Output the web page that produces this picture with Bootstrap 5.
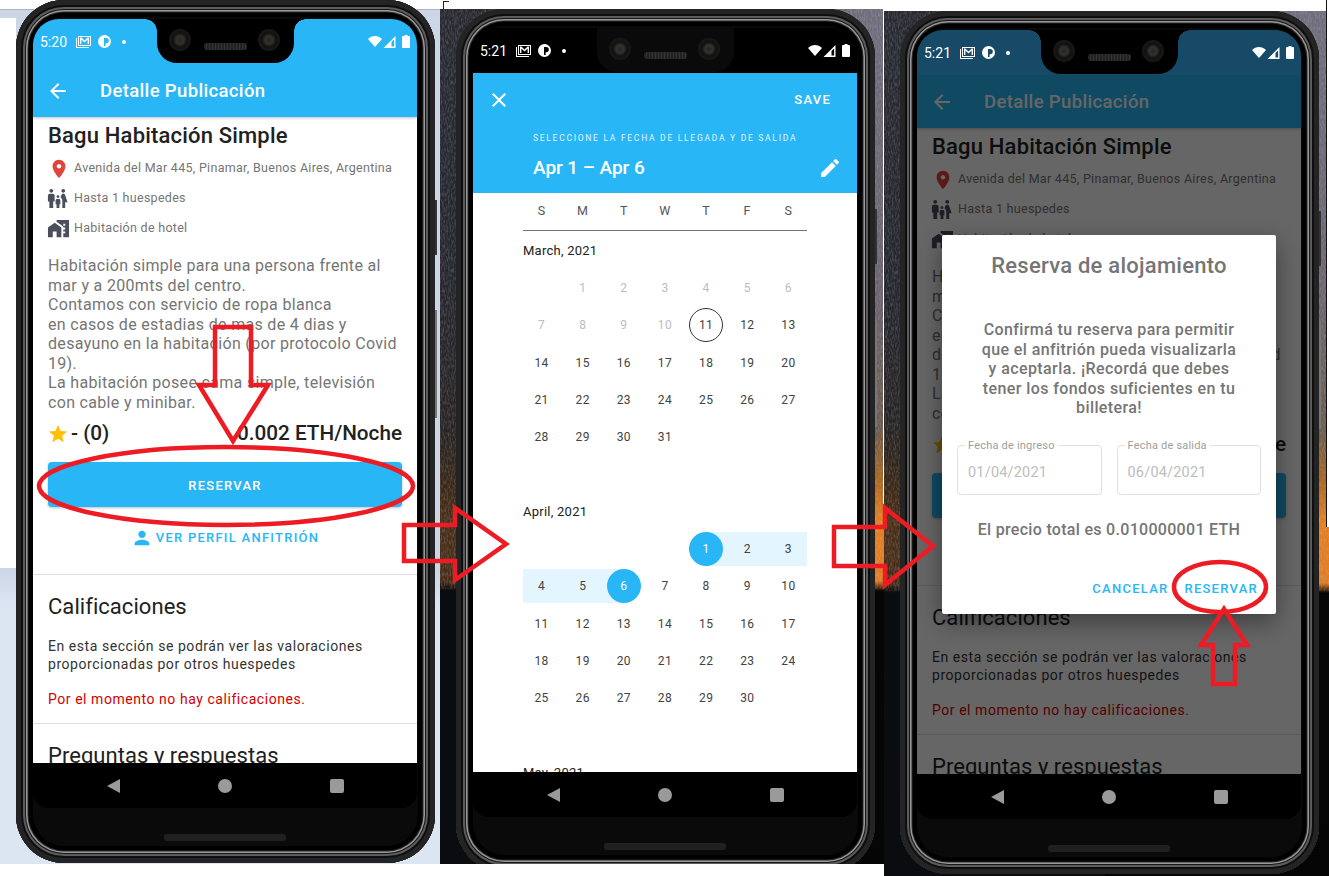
<!DOCTYPE html>
<html lang="es">
<head>
  <meta charset="UTF-8">
  <title>Reserva de alojamiento</title>
  <link href="https://cdn.jsdelivr.net/npm/bootstrap@5.3.0/dist/css/bootstrap.min.css" rel="stylesheet">
  <style>
    body { margin: 0; background: #fff; font-family: Roboto, "Liberation Sans", sans-serif; overflow: hidden; }
    .lienzo { width: 1329px; height: 876px; overflow: hidden; }
    .panel { overflow: hidden; }
    .panel-a { left: 0; top: 0; width: 440px; height: 864px;
      background: linear-gradient(to right, #fff 0, #fff 16px, #ccd6e7 16px, #ccd6e7 100%) top / 100% 568px no-repeat,
        linear-gradient(#cbd6e6, #dce6f3 40px, #dce6f3) bottom / 100% 296px no-repeat; }
    .regla { left: 0; top: 0; width: 440px; height: 10px; background: #fff; border-bottom: 1px solid #aab4c4; }
    .banda { left: 0; top: 10px; width: 16px; height: 8px; background: #ccd6e7; }
    .panel-b, .panel-c { background:
        linear-gradient(to right, rgba(12,15,20,.72) 0, rgba(12,15,20,.72) 50%, transparent 50%),
        linear-gradient(#6f6c7c 0, #6a6570 280px, #6b5a4c 420px, #a9651f 470px, #e27d20 510px, #e07b22 572px, #060606 582px, #050505 100%); }
    .panel-b { left: 440px; top: 9px; width: 444px; height: 855px; }
    .panel-c { left: 884px; top: 11px; width: 445px; height: 865px; }
    .grano { left: 0; top: 0; width: 100%; height: 580px; opacity: .28; }
    .linea-b { left: 883px; top: 5px; width: 1px; height: 500px; background: #fff; }
    .esquina { left: 443px; top: 1px; width: 6px; height: 8px; border-top: 1px solid #222; border-left: 1px solid #222; }
    .tapa-c { left: 1326px; top: 0; width: 3px; height: 527px; background: #fff; border-left: 1px solid #111; }

    .telefono { width: 419px; height: 863px; margin-left: 16px; padding: 19px 18px 0 17px; background: #0a0a0a; border-radius: 48px;
      box-shadow: inset 0 0 0 5px #242424, inset 0 0 0 7px #0e0e0e, inset 0 0 0 9px #5c5c5c, inset 0 0 0 10px #181818, inset 0 0 0 11.5px #9a9a9a, inset 0 0 0 12.5px #2a2a2a, inset 0 0 0 17px #000; }
    .pantalla { width: 384px; height: 789px; background: #000; border-radius: 26px 26px 16px 16px; overflow: hidden; }
    .parlante { width: 122px; height: 7px; margin: 26px auto 0; background: #202020; border-radius: 3px; }
    .muesca { left: 141px; top: 19px; width: 137px; height: 44px; background: #000; border-radius: 0 0 20px 20px; z-index: 4; }
    .muesca::before, .muesca::after { content: ""; position: absolute; top: 0; width: 12px; height: 12px; }
    .muesca::before { left: -12px; background: radial-gradient(circle at 0 100%, transparent 11.5px, #000 12px); }
    .muesca::after { right: -12px; background: radial-gradient(circle at 100% 100%, transparent 11.5px, #000 12px); }
    .telefono-b .muesca { background: #0a0a0a; }
    .telefono-b .muesca::before, .telefono-b .muesca::after { display: none; }
    .camara { top: 10px; width: 22px; height: 22px; border-radius: 50%; background: radial-gradient(circle, #26241f 0, #34322e 25%, #111 45%, #24221e 100%); }
    .camara-i { left: 12px; }
    .camara-d { right: 14px; }
    .rejilla { left: 47px; top: 24px; width: 43px; height: 7px; border-radius: 3px; background: repeating-linear-gradient(to right, #222 0, #222 2px, #333 2px, #333 3px); }
    .boton-a { right: -2px; top: 200px; width: 2px; height: 55px; background: #333; }
    .boton-b { right: -2px; top: 310px; width: 2px; height: 108px; background: #777; }

    .estado { height: 45px; flex: none; padding: 0 7px; color: #fff; font-size: 14px; background: #29b6f6; position: relative; z-index: 3; }
    .telefono-b .estado { background: #000; }
    .telefono-c .estado { background: #164a66; }
    .hora { width: 36px; padding-top: 1px; }
    .ico-mail { width: 15px; height: 12px; margin-right: 7px; }
    .ico-p { width: 13px; height: 13px; margin-right: 11px; }
    .punto { width: 4px; height: 4px; border-radius: 50%; background: #fff; }
    .ico-wifi { width: 14px; height: 11px; }
    .ico-senal { width: 13px; height: 12px; margin: 0 6px 0 1px; }
    .ico-bat { width: 8px; height: 13px; }

    .barra { height: 53px; flex: none; background: #29b6f6; color: #fff; padding-left: 13px; box-shadow: 0 1px 3px rgba(0,0,0,.25); position: relative; z-index: 2; }
    .ico-atras { width: 24px; height: 24px; margin-right: 30px; fill: #fff; }
    .titulo-barra { padding-top: 3px; font-size: 18.5px; font-weight: 500; letter-spacing: .35px; }

    .detalle { background: #fff; color: #212121; }
    .bloque { padding: 0 15px; }
    .titulo-pub { margin: 6px 0 4px; font-size: 22px; line-height: 26px; font-weight: 500; letter-spacing: .18px; color: #212121; }
    .fila-dato { height: 30px; padding-top: 1px; color: #757575; font-size: 12.5px; letter-spacing: .29px; }
    .ico-dato { flex: none; fill: #4b4f5b; }
    .ico-pin { fill: #e0443a; width: 22px; height: 22px; margin-right: 4px; }
    .ico-familia { width: 23px; height: 23px; margin: 0 5px 0 -2px; }
    .ico-casa { width: 23px; height: 23px; margin: 0 4px 0 -1px; }
    .descripcion { margin: 13px 0 0; font-size: 16px; line-height: 19.5px; letter-spacing: .32px; color: #757575; }
    .valoracion { margin-top: 9px; height: 26px; font-size: 20.7px; font-weight: 500; color: #212121; }
    .ico-estrella { width: 22px; height: 22px; margin: 0 2px 0 -1px; fill: #ffc107; }
    .btn-reservar { display: block; width: 100%; height: 45px; margin-top: 15px; padding: 2px 0 0; line-height: 43px; border: 0; border-radius: 4px; background: #29b6f6; color: #fff; font-size: 13px; font-weight: 500; letter-spacing: 1.25px; box-shadow: 0 1px 3px rgba(0,0,0,.25); }
    .btn-reservar:hover { background: #29b6f6; color: #fff; }
    .enlace-perfil { height: 20px; margin-top: 21px; color: #29b6f6; font-size: 13px; font-weight: 500; letter-spacing: 1.25px; }
    .ico-persona { width: 22px; height: 22px; margin-right: 3px; fill: #29b6f6; }
    .seccion { border-top: 1px solid #e0e0e0; margin-top: 26px; padding: 19px 15px 0; }
    .seccion-dos { margin-top: 15px; }
    .subtitulo { margin: 0; font-size: 22px; line-height: 26px; font-weight: 400; color: #212121; letter-spacing: .05px; }
    .aviso { margin: 17px 0 0; font-size: 14px; line-height: 18px; letter-spacing: .55px; color: #333; }
    .aviso-rojo { color: #d50000; }

    .navegacion { height: 45px; flex: none; background: #000; gap: 98px; }
    .nav-atras { width: 0; height: 0; border-style: solid; border-width: 7.5px 13px 7.5px 0; border-color: transparent #9a9a9a transparent transparent; }
    .nav-inicio { width: 14px; height: 14px; border-radius: 50%; background: #9a9a9a; }
    .nav-tareas { width: 14px; height: 14px; border-radius: 2px; background: #9a9a9a; }

    .cabecera { height: 120px; flex: none; background: #29b6f6; color: #fff; }
    .cab-fila { height: 53px; padding: 0 26px 0 14px; }
    .ico-cerrar { width: 24px; height: 24px; fill: #fff; }
    .guardar { font-size: 13px; font-weight: 500; letter-spacing: 1.25px; }
    .cab-ayuda { margin: 6px 0 0; padding-left: 60px; height: 12px; line-height: 12px; font-size: 8.5px; font-weight: 400; letter-spacing: 1.72px; color: #e3f5fe; }
    .cab-rango { margin-top: 10px; height: 28px; padding: 0 15px 0 60px; font-size: 19px; font-weight: 500; letter-spacing: -.05px; }
    .ico-lapiz { width: 24px; height: 24px; fill: #fff; }
    .calendario { background: #fff; color: #424242; font-size: 12px; letter-spacing: .4px; }
    .semana { height: 38px; margin: 0 50px 9px; border-bottom: 1px solid #757575; }
    .semana-fila { height: 37px; margin: 0 -2px; display: grid; grid-template-columns: repeat(7, 1fr); align-items: center; text-align: center; font-size: 12.5px; color: #555; }
    .mes { margin: 0 50px; padding-bottom: 45px; }
    .mes-nombre { height: 20px; padding-top: 1px; line-height: 20px; margin-bottom: 9.3px; font-size: 13px; color: #212121; letter-spacing: .25px; }
    .dias { margin: 0 -2px; display: grid; grid-template-columns: repeat(7, 1fr); grid-auto-rows: 37.33px; align-items: center; clip-path: inset(0 2px); }
    .dia { height: 34px; display: flex; align-items: center; justify-content: center; position: relative; }
    .dia-off { color: #bdbdbd; }
    .dia-hoy span { width: 34px; height: 34px; border: 1px solid #333; border-radius: 50%; display: flex; align-items: center; justify-content: center; }
    .dia-rango { background: #e3f5fe; }
    .dia-ini { background: linear-gradient(to right, transparent 50%, #e3f5fe 50%); }
    .dia-fin { background: linear-gradient(to right, #e3f5fe 50%, transparent 50%); }
    .dia-sel span { width: 34px; height: 34px; border-radius: 50%; background: #29b6f6; color: #fff; display: flex; align-items: center; justify-content: center; }
    .col-1a { grid-column-start: 2; }
    .col-5a { grid-column-start: 5; }

    .velo { left: 0; right: 0; top: 45px; bottom: 45px; background: rgba(0,0,0,.6); z-index: 3; }
    .dialogo { width: 334px; height: 379px; border: 0; border-radius: 2px; background: #fff; color: #757575; box-shadow: 0 8px 24px rgba(0,0,0,.4); padding: 0 15px; }
    .dlg-titulo { margin: 18px 0 0; font-size: 22px; line-height: 26px; font-weight: 500; letter-spacing: .25px; color: #757575; }
    .dlg-texto { margin: 41px 0 0; font-size: 16px; line-height: 19.5px; font-weight: 500; letter-spacing: .4px; color: #757575; }
    .campos { margin-top: 27.5px; gap: 15px; }
    .campo { width: 145px; height: 50px; border: 1px solid #e0e0e0; border-radius: 4px; padding: 0 10px; line-height: 50px; font-size: 14.5px; letter-spacing: .2px; color: #bdbdbd; }
    .campo-valor { display: block; padding-top: 2px; }
    .campo-rotulo { left: 7px; top: -7px; padding: 0 3px; height: 14px; line-height: 14px; background: #fff; font-size: 11px; letter-spacing: .2px; color: #9e9e9e; }
    .dlg-total { margin: 23.5px 0 0; font-size: 16px; line-height: 22px; font-weight: 500; color: #757575; letter-spacing: .3px; }
    .dlg-acciones { margin-top: 38.5px; padding-right: 3px; gap: 16px; color: #29b6f6; font-size: 13px; font-weight: 500; letter-spacing: 1.25px; }

    .marcas { left: 0; top: 0; z-index: 10; pointer-events: none; }
    .marcas polygon, .marcas ellipse { fill: none; stroke: #ed1c24; stroke-width: 4.5; }
  </style>
</head>
<body>

<svg width="0" height="0" class="position-absolute">
  <symbol id="i-atras" viewBox="0 0 24 24"><path d="M20 11H7.83l5.59-5.59L12 4l-8 8 8 8 1.41-1.41L7.83 13H20v-2z"/></symbol>
  <symbol id="i-cerrar" viewBox="0 0 24 24"><path d="M19 6.41L17.59 5 12 10.59 6.41 5 5 6.41 10.59 12 5 17.59 6.41 19 12 13.41 17.59 19 19 17.59 13.41 12z"/></symbol>
  <symbol id="i-lapiz" viewBox="0 0 24 24"><path d="M3 17.25V21h3.75L17.81 9.94l-3.75-3.75L3 17.25zM20.71 7.04c.39-.39.39-1.02 0-1.41l-2.34-2.34c-.39-.39-1.02-.39-1.41 0l-1.83 1.83 3.75 3.75 1.83-1.83z"/></symbol>
  <symbol id="i-persona" viewBox="0 0 24 24"><path d="M12 12c2.21 0 4-1.79 4-4s-1.79-4-4-4-4 1.79-4 4 1.79 4 4 4zm0 2c-2.67 0-8 1.34-8 4v2h16v-2c0-2.66-5.33-4-8-4z"/></symbol>
  <symbol id="i-pin" viewBox="0 0 24 24"><path d="M12 2C8.13 2 5 5.13 5 9c0 5.25 7 13 7 13s7-7.75 7-13c0-3.87-3.13-7-7-7zm0 9.5c-1.38 0-2.5-1.12-2.5-2.5s1.12-2.5 2.5-2.5 2.5 1.12 2.5 2.5-1.12 2.5-2.5 2.5z"/></symbol>
  <symbol id="i-estrella" viewBox="0 0 24 24"><path d="M12 17.27L18.18 21l-1.64-7.03L22 9.24l-7.19-.61L12 2 9.19 8.63 2 9.24l5.46 4.73L5.82 21z"/></symbol>
  <symbol id="i-familia" viewBox="0 0 24 24"><path d="M16 4c0-1.11.89-2 2-2s2 .89 2 2-.89 2-2 2-2-.89-2-2zm4 18v-6h2.5l-2.54-7.63C19.68 7.55 18.92 7 18.06 7h-.12c-.86 0-1.63.55-1.9 1.37l-.86 2.58c1.08.6 1.82 1.73 1.82 3.05v8h3zm-7.5-10.5c.83 0 1.5-.67 1.5-1.5s-.67-1.5-1.5-1.5S11 9.17 11 10s.67 1.5 1.5 1.5zM5.5 6c1.11 0 2-.89 2-2s-.89-2-2-2-2 .89-2 2 .89 2 2 2zm2 16v-7H9V9c0-1.1-.9-2-2-2H4c-1.1 0-2 .9-2 2v6h1.5v7h4zm6.5 0v-4h1v-4c0-.82-.68-1.5-1.5-1.5h-2c-.82 0-1.5.68-1.5 1.5v4h1v4h3z"/></symbol>
  <symbol id="i-casa" viewBox="0 0 24 24"><path d="M1 11v10h5v-6h4v6h5V11L8 6zM10 3v1.97l7 5V11h2v2h-2v2h2v2h-2v4h6V3H10zm9 6h-2V7h2v2z"/></symbol>
  <symbol id="i-mail" viewBox="0 0 15 12"><path fill="#fff" fill-rule="evenodd" d="M2 0h13v10H2zM3 1v8h11V1zM0 2h1v9h12v1H0zM4 1.500h1.400L8.500 4.400l3.100-2.900H13V8h-1.400V3.600L8.500 6.400 5.400 3.600V8H4z"/></symbol>
  <symbol id="i-p" viewBox="0 0 13 13"><path fill="#fff" fill-rule="evenodd" d="M6.500 0a6.500 6.500 0 1 1 0 13 6.500 6.500 0 0 1 0-13zM6 3v8h1.600V8.200h.6a2.600 2.600 0 0 0 0-5.200z"/></symbol>
  <symbol id="i-wifi" viewBox="0 0 14 11"><path fill="#fff" d="M7 11L0 3C4-1 10-1 14 3z"/></symbol>
  <symbol id="i-senal" viewBox="0 0 12 12"><path fill="#fff" fill-rule="evenodd" d="M12 0v12H0zM10.600 3.400L8 6v4.600h2.600z"/></symbol>
  <symbol id="i-bat" viewBox="0 0 8 13"><path fill="#fff" d="M2.500 0h3v1H7a1 1 0 0 1 1 1v10a1 1 0 0 1-1 1H1a1 1 0 0 1-1-1V2a1 1 0 0 1 1-1h1.500z"/></symbol>
  <filter id="ruido"><feTurbulence type="fractalNoise" baseFrequency="0.7 0.25" numOctaves="2" seed="4"/><feColorMatrix values="0 0 0 0 .75  0 0 0 0 .75  0 0 0 0 .8  1.6 0 0 0 -.6"/></filter>
</svg>

<div class="lienzo position-relative">

  <!-- primer telefono: detalle -->
  <div class="panel panel-a position-absolute">
    <div class="regla position-absolute"></div>
    <div class="banda position-absolute"></div>
    <div class="telefono position-relative">
      <div class="pantalla d-flex flex-column">
        <div class="estado d-flex align-items-center">
          <span class="hora">5:20</span>
          <svg class="ico-mail"><use href="#i-mail"/></svg>
          <svg class="ico-p"><use href="#i-p"/></svg>
          <span class="punto"></span>
          <span class="ms-auto d-flex align-items-center">
            <svg class="ico-wifi"><use href="#i-wifi"/></svg>
            <svg class="ico-senal"><use href="#i-senal"/></svg>
            <svg class="ico-bat"><use href="#i-bat"/></svg>
          </span>
        </div>
        <div class="barra d-flex align-items-center">
          <svg class="ico-atras"><use href="#i-atras"/></svg>
          <span class="titulo-barra">Detalle Publicación</span>
        </div>
        <div class="detalle flex-grow-1 overflow-hidden">
          <div class="bloque">
            <h1 class="titulo-pub">Bagu Habitación Simple</h1>
            <div class="fila-dato d-flex align-items-center"><svg class="ico-dato ico-pin"><use href="#i-pin"/></svg>Avenida del Mar 445, Pinamar, Buenos Aires, Argentina</div>
            <div class="fila-dato d-flex align-items-center"><svg class="ico-dato ico-familia"><use href="#i-familia"/></svg>Hasta 1 huespedes</div>
            <div class="fila-dato d-flex align-items-center"><svg class="ico-dato ico-casa"><use href="#i-casa"/></svg>Habitación de hotel</div>
            <p class="descripcion">Habitación simple para una persona frente al<br>mar y a 200mts del centro.<br>Contamos con servicio de ropa blanca<br>en casos de estadias de mas de 4 dias y<br>desayuno en la habitación (por protocolo Covid<br>19).<br>La habitación posee cama simple, televisión<br>con cable y minibar.</p>
            <div class="valoracion d-flex align-items-center justify-content-between">
              <span class="d-flex align-items-center"><svg class="ico-estrella"><use href="#i-estrella"/></svg>- (0)</span>
              <span>0.002 ETH/Noche</span>
            </div>
            <button type="button" class="btn btn-reservar">RESERVAR</button>
            <div class="enlace-perfil d-flex align-items-center justify-content-center"><svg class="ico-persona"><use href="#i-persona"/></svg>VER PERFIL ANFITRIÓN</div>
          </div>
          <div class="seccion">
            <h2 class="subtitulo">Calificaciones</h2>
            <p class="aviso">En esta sección se podrán ver las valoraciones<br>proporcionadas por otros huespedes</p>
            <p class="aviso aviso-rojo">Por el momento no hay calificaciones.</p>
          </div>
          <div class="seccion seccion-dos">
            <h2 class="subtitulo">Preguntas y respuestas</h2>
          </div>
        </div>
        <div class="navegacion d-flex justify-content-center align-items-center">
          <span class="nav-atras"></span><span class="nav-inicio"></span><span class="nav-tareas"></span>
        </div>
      </div>
      <div class="parlante"></div>
      <div class="muesca position-absolute">
        <span class="camara camara-i position-absolute"></span><span class="rejilla position-absolute"></span><span class="camara camara-d position-absolute"></span>
      </div>
      <span class="boton-a position-absolute"></span><span class="boton-b position-absolute"></span>
    </div>
  </div>

  <!-- segundo telefono: calendario -->
  <div class="panel panel-b position-absolute">
    <svg class="grano position-absolute"><rect width="100%" height="100%" filter="url(#ruido)"/></svg>
    <div class="telefono telefono-b position-relative">
      <div class="pantalla d-flex flex-column">
        <div class="estado d-flex align-items-center">
          <span class="hora">5:21</span>
          <svg class="ico-mail"><use href="#i-mail"/></svg>
          <svg class="ico-p"><use href="#i-p"/></svg>
          <span class="punto"></span>
          <span class="ms-auto d-flex align-items-center">
            <svg class="ico-wifi"><use href="#i-wifi"/></svg>
            <svg class="ico-senal"><use href="#i-senal"/></svg>
            <svg class="ico-bat"><use href="#i-bat"/></svg>
          </span>
        </div>
        <div class="cabecera">
          <div class="cab-fila d-flex align-items-center justify-content-between">
            <svg class="ico-cerrar"><use href="#i-cerrar"/></svg>
            <span class="guardar">SAVE</span>
          </div>
          <p class="cab-ayuda">SELECCIONE LA FECHA DE LLEGADA Y DE SALIDA</p>
          <div class="cab-rango d-flex align-items-center justify-content-between">
            <span>Apr 1 – Apr 6</span>
            <svg class="ico-lapiz"><use href="#i-lapiz"/></svg>
          </div>
        </div>
        <div class="calendario flex-grow-1 overflow-hidden">
          <div class="semana"><div class="semana-fila"><span>S</span><span>M</span><span>T</span><span>W</span><span>T</span><span>F</span><span>S</span></div></div>
          <div class="mes">
            <div class="mes-nombre">March, 2021</div>
            <div class="dias">
              <div class="dia dia-off col-1a">1</div><div class="dia dia-off">2</div><div class="dia dia-off">3</div><div class="dia dia-off">4</div><div class="dia dia-off">5</div><div class="dia dia-off">6</div>
              <div class="dia dia-off">7</div><div class="dia dia-off">8</div><div class="dia dia-off">9</div><div class="dia dia-off">10</div><div class="dia dia-hoy"><span>11</span></div><div class="dia">12</div><div class="dia">13</div>
              <div class="dia">14</div><div class="dia">15</div><div class="dia">16</div><div class="dia">17</div><div class="dia">18</div><div class="dia">19</div><div class="dia">20</div>
              <div class="dia">21</div><div class="dia">22</div><div class="dia">23</div><div class="dia">24</div><div class="dia">25</div><div class="dia">26</div><div class="dia">27</div>
              <div class="dia">28</div><div class="dia">29</div><div class="dia">30</div><div class="dia">31</div>
            </div>
          </div>
          <div class="mes">
            <div class="mes-nombre">April, 2021</div>
            <div class="dias">
              <div class="dia dia-ini dia-sel col-5a"><span>1</span></div><div class="dia dia-rango">2</div><div class="dia dia-rango">3</div>
              <div class="dia dia-rango">4</div><div class="dia dia-rango">5</div><div class="dia dia-fin dia-sel"><span>6</span></div><div class="dia">7</div><div class="dia">8</div><div class="dia">9</div><div class="dia">10</div>
              <div class="dia">11</div><div class="dia">12</div><div class="dia">13</div><div class="dia">14</div><div class="dia">15</div><div class="dia">16</div><div class="dia">17</div>
              <div class="dia">18</div><div class="dia">19</div><div class="dia">20</div><div class="dia">21</div><div class="dia">22</div><div class="dia">23</div><div class="dia">24</div>
              <div class="dia">25</div><div class="dia">26</div><div class="dia">27</div><div class="dia">28</div><div class="dia">29</div><div class="dia">30</div>
            </div>
          </div>
          <div class="mes">
            <div class="mes-nombre">May, 2021</div>
          </div>
        </div>
        <div class="navegacion d-flex justify-content-center align-items-center">
          <span class="nav-atras"></span><span class="nav-inicio"></span><span class="nav-tareas"></span>
        </div>
      </div>
      <div class="parlante"></div>
      <div class="muesca position-absolute">
        <span class="camara camara-i position-absolute"></span><span class="rejilla position-absolute"></span><span class="camara camara-d position-absolute"></span>
      </div>
      <span class="boton-a position-absolute"></span><span class="boton-b position-absolute"></span>
    </div>
  </div>

  <!-- tercer telefono: dialogo de reserva -->
  <div class="panel panel-c position-absolute">
    <svg class="grano position-absolute"><rect width="100%" height="100%" filter="url(#ruido)"/></svg>
    <div class="telefono telefono-c position-relative">
      <div class="pantalla d-flex flex-column position-relative">
        <div class="estado d-flex align-items-center">
          <span class="hora">5:21</span>
          <svg class="ico-mail"><use href="#i-mail"/></svg>
          <svg class="ico-p"><use href="#i-p"/></svg>
          <span class="punto"></span>
          <span class="ms-auto d-flex align-items-center">
            <svg class="ico-wifi"><use href="#i-wifi"/></svg>
            <svg class="ico-senal"><use href="#i-senal"/></svg>
            <svg class="ico-bat"><use href="#i-bat"/></svg>
          </span>
        </div>
        <div class="barra d-flex align-items-center">
          <svg class="ico-atras"><use href="#i-atras"/></svg>
          <span class="titulo-barra">Detalle Publicación</span>
        </div>
        <div class="detalle flex-grow-1 overflow-hidden">
          <div class="bloque">
            <h2 class="titulo-pub">Bagu Habitación Simple</h2>
            <div class="fila-dato d-flex align-items-center"><svg class="ico-dato ico-pin"><use href="#i-pin"/></svg>Avenida del Mar 445, Pinamar, Buenos Aires, Argentina</div>
            <div class="fila-dato d-flex align-items-center"><svg class="ico-dato ico-familia"><use href="#i-familia"/></svg>Hasta 1 huespedes</div>
            <div class="fila-dato d-flex align-items-center"><svg class="ico-dato ico-casa"><use href="#i-casa"/></svg>Habitación de hotel</div>
            <p class="descripcion">Habitación simple para una persona frente al<br>mar y a 200mts del centro.<br>Contamos con servicio de ropa blanca<br>en casos de estadias de mas de 4 dias y<br>desayuno en la habitación (por protocolo Covid<br>19).<br>La habitación posee cama simple, televisión<br>con cable y minibar.</p>
            <div class="valoracion d-flex align-items-center justify-content-between">
              <span class="d-flex align-items-center"><svg class="ico-estrella"><use href="#i-estrella"/></svg>- (0)</span>
              <span>0.002 ETH/Noche</span>
            </div>
            <button type="button" class="btn btn-reservar">RESERVAR</button>
            <div class="enlace-perfil d-flex align-items-center justify-content-center"><svg class="ico-persona"><use href="#i-persona"/></svg>VER PERFIL ANFITRIÓN</div>
          </div>
          <div class="seccion">
            <h2 class="subtitulo">Calificaciones</h2>
            <p class="aviso">En esta sección se podrán ver las valoraciones<br>proporcionadas por otros huespedes</p>
            <p class="aviso aviso-rojo">Por el momento no hay calificaciones.</p>
          </div>
          <div class="seccion seccion-dos">
            <h2 class="subtitulo">Preguntas y respuestas</h2>
          </div>
        </div>
        <div class="navegacion d-flex justify-content-center align-items-center">
          <span class="nav-atras"></span><span class="nav-inicio"></span><span class="nav-tareas"></span>
        </div>
        <div class="velo position-absolute d-flex align-items-center justify-content-center">
          <div class="dialogo card text-center">
            <h2 class="dlg-titulo">Reserva de alojamiento</h2>
            <p class="dlg-texto">Confirmá tu reserva para permitir<br>que el anfitrión pueda visualizarla<br>y aceptarla. ¡Recordá que debes<br>tener los fondos suficientes en tu<br>billetera!</p>
            <div class="campos d-flex text-start">
              <div class="campo position-relative"><span class="campo-rotulo position-absolute">Fecha de ingreso</span><span class="campo-valor">01/04/2021</span></div>
              <div class="campo position-relative"><span class="campo-rotulo position-absolute">Fecha de salida</span><span class="campo-valor">06/04/2021</span></div>
            </div>
            <p class="dlg-total">El precio total es 0.010000001 ETH</p>
            <div class="dlg-acciones d-flex justify-content-end">
              <span>CANCELAR</span><span>RESERVAR</span>
            </div>
          </div>
        </div>
      </div>
      <div class="parlante"></div>
      <div class="muesca position-absolute">
        <span class="camara camara-i position-absolute"></span><span class="rejilla position-absolute"></span><span class="camara camara-d position-absolute"></span>
      </div>
      <span class="boton-a position-absolute"></span><span class="boton-b position-absolute"></span>
    </div>
  </div>

  <span class="linea-b position-absolute"></span>
  <span class="esquina position-absolute"></span>
  <span class="tapa-c position-absolute"></span>

  <!-- marcas rojas -->
  <svg class="marcas position-absolute" width="1329" height="876">
    <polygon points="215,327 251,327 251,385 268,385 233,441 199,385 215,385"/>
    <ellipse cx="226" cy="486" rx="187" ry="39"/>
    <polygon points="404,525 455,525 455,508 506,544 455,580 455,561 404,561"/>
    <polygon points="834,527 885,527 885,508 933,546 885,585 885,566 834,566"/>
    <ellipse cx="1220" cy="587" rx="46" ry="25"/>
    <polygon points="1224,609 1247,645 1235,645 1235,684 1213,684 1213,645 1201,645"/>
  </svg>
</div>

<script src="https://cdn.jsdelivr.net/npm/bootstrap@5.3.0/dist/js/bootstrap.bundle.min.js"></script>
</body>
</html>
